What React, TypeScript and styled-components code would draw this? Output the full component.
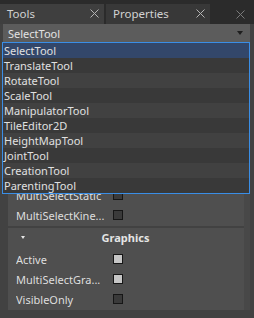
import React from "react";
import styled, { createGlobalStyle } from "styled-components";

const GlobalStyle = createGlobalStyle`
  html, body {
    margin: 0;
    padding: 0;
    background: #424242;
    font-family: "Noto Sans", "Open Sans", sans-serif;
    font-size: 11px;
    color: #dcdcdc;
  }
`;

const TOOLS = [
  "SelectTool",
  "TranslateTool",
  "RotateTool",
  "ScaleTool",
  "ManipulatorTool",
  "TileEditor2D",
  "HeightMapTool",
  "JointTool",
  "CreationTool",
  "ParentingTool",
];

const SELECTION_ROWS = [
  { label: "Active", checked: true },
  { label: "Visible", checked: true },
  { label: "MultiSelectAll", checked: false },
  { label: "MultiSelectEntities", checked: false },
  { label: "MultiSelectLights", checked: false },
  { label: "MultiSelectCameras", checked: false },
  { label: "MultiSelectStatic", checked: false },
  { label: "MultiSelectKine...", checked: false },
];

const GRAPHICS_ROWS = [
  { label: "Active", checked: true },
  { label: "MultiSelectGra...", checked: true },
  { label: "VisibleOnly", checked: false },
];

const CloseIcon = ({ dim }: { dim?: boolean }) => (
  <svg width="9" height="9" viewBox="0 0 9 9">
    <path
      d="M0.5 0.5 L8.5 8.5 M8.5 0.5 L0.5 8.5"
      stroke={dim ? "#7a7a7a" : "#b4b4b4"}
      strokeWidth="1"
    />
  </svg>
);

export default function App() {
  return (
    <>
      <GlobalStyle />
      <Window>
        <TabBar>
          <Tab $active>
            <span>Tools</span>
            <CloseIcon />
          </Tab>
          <Tab>
            <span>Properties</span>
            <CloseIcon />
          </Tab>
          <TabFiller>
            <CloseIcon dim />
          </TabFiller>
        </TabBar>
        <Body>
          <Combo>
            <span>SelectTool</span>
            <ComboArrow />
          </Combo>
          <Content>
            <Groups>
              <Group>
                <GroupHeader>
                  <Caret />
                  <GroupTitle>Selection</GroupTitle>
                </GroupHeader>
                {SELECTION_ROWS.map((r) => (
                  <Row key={r.label}>
                    <Label>{r.label}</Label>
                    <Check $checked={r.checked} />
                  </Row>
                ))}
              </Group>
              <Group>
                <GroupHeader>
                  <Caret />
                  <GroupTitle>Graphics</GroupTitle>
                </GroupHeader>
                {GRAPHICS_ROWS.map((r) => (
                  <Row key={r.label}>
                    <Label>{r.label}</Label>
                    <Check $checked={r.checked} />
                  </Row>
                ))}
              </Group>
            </Groups>
            <ScrollTrack />
          </Content>
          <DropList>
            {TOOLS.map((t, i) => (
              <DropItem key={t} $selected={i === 0} $odd={i % 2 === 1}>
                {t}
              </DropItem>
            ))}
          </DropList>
        </Body>
      </Window>
    </>
  );
}

const Window = styled.div`
  width: 254px;
  height: 318px;
  display: flex;
  flex-direction: column;
  overflow: hidden;
`;

const TabBar = styled.div`
  display: flex;
  height: 24px;
  padding-top: 4px;
  box-sizing: border-box;
  background: #2b2b2b;
`;

const Tab = styled.div<{ $active?: boolean }>`
  width: 104px;
  margin-right: 2px;
  display: flex;
  align-items: center;
  justify-content: space-between;
  padding: 0 5px 1px 7px;
  box-sizing: border-box;
  background: ${({ $active }) => ($active ? "#3f3f3f" : "#383838")};
  color: #d2d2d2;
  font-size: 11.5px;
`;

const TabFiller = styled.div`
  flex: 1;
  display: flex;
  align-items: center;
  justify-content: flex-end;
  padding-right: 9px;
`;

const Body = styled.div`
  position: relative;
  flex: 1;
  display: flex;
  flex-direction: column;
  background: #424242;
`;

const Combo = styled.div`
  height: 18px;
  margin: 0 4px 0 3px;
  display: flex;
  align-items: center;
  justify-content: space-between;
  padding: 0 7px 0 5px;
  background: #5c5c5c;
  color: #e2e2e2;
`;

const ComboArrow = styled.div`
  width: 0;
  height: 0;
  border-left: 3.5px solid transparent;
  border-right: 3.5px solid transparent;
  border-top: 4px solid #1e1e1e;
`;

const Content = styled.div`
  display: flex;
  margin-top: 2px;
  padding-right: 4px;
`;

const Groups = styled.div`
  width: 236px;
  margin-left: 8px;
  display: flex;
  flex-direction: column;
  gap: 2px;
`;

const ScrollTrack = styled.div`
  width: 6px;
  background: #484848;
`;

const Group = styled.div`
  background: #4f4f4f;
  padding-bottom: 1px;
`;

const GroupHeader = styled.div`
  height: 21px;
  box-sizing: border-box;
  display: flex;
  align-items: center;
  padding: 0 0 2px 13px;
`;

const Caret = styled.div`
  width: 0;
  height: 0;
  border-left: 2.5px solid transparent;
  border-right: 2.5px solid transparent;
  border-top: 3px solid #e6e6e6;
`;

const GroupTitle = styled.div`
  flex: 1;
  text-align: center;
  font-weight: bold;
  color: #e4e4e4;
  margin-right: 18px;
`;

const Row = styled.div`
  height: 20px;
  display: flex;
  align-items: center;
  padding-left: 8px;
`;

const Label = styled.div`
  width: 97px;
  color: #dedede;
  white-space: nowrap;
  overflow: hidden;
`;

const Check = styled.div<{ $checked?: boolean }>`
  width: 8px;
  height: 8px;
  border: 1px solid #161616;
  background: ${({ $checked }) => ($checked ? "#c6c6c6" : "#3a3a3a")};
`;

const DropList = styled.div`
  position: absolute;
  top: 18px;
  left: 2px;
  width: 246px;
  border: 1px solid #3a8ee6;
  background: #3c3c3c;
  z-index: 2;
`;

const DropItem = styled.div<{ $selected?: boolean; $odd?: boolean }>`
  height: 15px;
  line-height: 15px;
  padding-left: 1px;
  color: #e0e0e0;
  background: ${({ $selected, $odd }) =>
    $selected ? "#33476a" : $odd ? "#393939" : "#414141"};
`;
